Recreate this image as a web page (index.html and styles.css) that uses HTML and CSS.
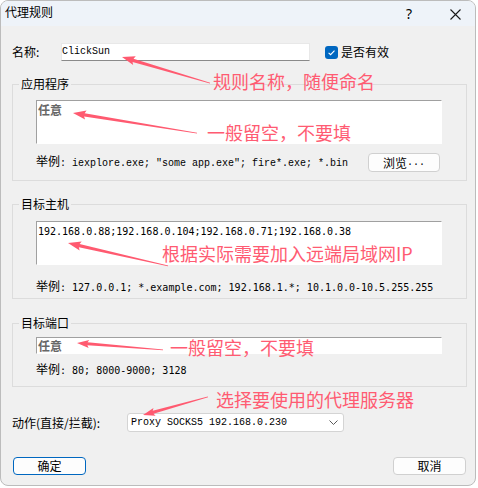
FILE: index.html
```html
<!DOCTYPE html>
<html lang="zh-CN">
<head>
<meta charset="utf-8">
<title>代理规则</title>
<link rel="stylesheet" href="styles.css">
</head>
<body>
<div class="window">
  <div class="titlebar">
    <span class="title">代理规则</span>
    <span class="help">?</span>
    <span class="close">
      <svg width="11" height="11" viewBox="0 0 11 11"><path d="M0.5 0.5 L10.5 10.5 M10.5 0.5 L0.5 10.5" stroke="#1a1a1a" stroke-width="1.1" fill="none"/></svg>
    </span>
  </div>

  <div class="content">
    <div class="name-row">
      <span class="name-label">名称:</span>
      <div class="input mono">ClickSun</div>
      <span class="check">
        <svg width="13" height="13" viewBox="0 0 13 13"><path d="M3.6 6.8 L5.6 8.7 L9.5 4.6" stroke="#fff" stroke-width="1.1" fill="none"/></svg>
      </span>
      <span class="check-label">是否有效</span>
    </div>

    <fieldset class="group group-app">
      <legend>应用程序</legend>
      <div class="group-body">
        <div class="area area-tall"><span class="placeholder">任意</span></div>
        <div class="example-row">
          <span class="example">举例<span class="mono">: iexplore.exe; "some app.exe"; fire*.exe; *.bin</span></span>
          <button class="btn browse">浏览<span class="mono">...</span></button>
        </div>
      </div>
    </fieldset>

    <fieldset class="group group-host">
      <legend>目标主机</legend>
      <div class="group-body">
        <div class="area area-tall"><span class="sansmono hosts">192.168.0.88;192.168.0.104;192.168.0.71;192.168.0.38</span></div>
        <div class="example-row">
          <span class="example">举例<span class="sansmono">: 127.0.0.1; *.example.com; 192.168.1.*; 10.1.0.0-10.5.255.255</span></span>
        </div>
      </div>
    </fieldset>

    <fieldset class="group group-port">
      <legend>目标端口</legend>
      <div class="group-body">
        <div class="area area-short"><span class="placeholder">任意</span></div>
        <div class="example-row">
          <span class="example">举例<span class="sansmono">: 80; 8000-9000; 3128</span></span>
        </div>
      </div>
    </fieldset>

    <div class="action-row">
      <span class="action-label">动作(直接/拦截):</span>
      <div class="select">
        <span class="mono">Proxy SOCKS5 192.168.0.230</span>
        <svg width="9" height="5" viewBox="0 0 9 5"><path d="M0.5 0.5 L4.5 4.5 L8.5 0.5" stroke="#5a5a5a" stroke-width="1" fill="none"/></svg>
      </div>
    </div>

    <div class="button-row">
      <button class="btn default">确定</button>
      <button class="btn">取消</button>
    </div>
  </div>
</div>

<div class="notes">
  <svg class="arrows" width="478" height="488" viewBox="0 0 478 488">
    <g fill="#ff5a70">
      <g transform="translate(122 57) rotate(16.5)"><polygon points="0,0 13,-4.6 11.5,-1.7 91.8,-0.4 91.8,0.4 11.5,1.7 13,4.6"/></g>
      <g transform="translate(73 113) rotate(9.2)"><polygon points="0,0 13,-4.6 11.5,-1.7 125.6,-0.4 125.6,0.4 11.5,1.7 13,4.6"/></g>
      <g transform="translate(68 243) rotate(12.9)"><polygon points="0,0 13,-4.6 11.5,-1.7 102.6,-0.4 102.6,0.4 11.5,1.7 13,4.6"/></g>
      <g transform="translate(77 343) rotate(4.6)"><polygon points="0,0 12,-4 10.5,-1.5 86.3,-0.4 86.3,0.4 10.5,1.5 12,4"/></g>
      <g transform="translate(143 415) rotate(-15.5)"><polygon points="0,0 12,-4 10.5,-1.5 67.4,-0.4 67.4,0.4 10.5,1.5 12,4"/></g>
    </g>
  </svg>
  <span class="note note-name">规则名称，随便命名</span>
  <span class="note note-app">一般留空，不要填</span>
  <span class="note note-host">根据实际需要加入远端局域网IP</span>
  <span class="note note-port">一般留空，不要填</span>
  <span class="note note-action">选择要使用的代理服务器</span>
</div>
</body>
</html>
```

FILE: styles.css
```css
html, body {
  margin: 0;
  padding: 0;
  background: #ffffff;
}

body {
  position: relative;
  width: 478px;
  height: 488px;
  overflow: hidden;
}

.window {
  width: 476px;
  height: 486px;
  box-sizing: border-box;
  border: 1px solid #bcbcbc;
  border-radius: 8px;
  background: #f0f0f0;
  overflow: hidden;
  font: 12px/16px "Noto Sans CJK SC", sans-serif;
  color: #000;
}

.mono {
  font-family: "Liberation Mono", "Noto Sans CJK SC", monospace;
  font-size: 10px;
}

.sansmono {
  font-family: "DejaVu Sans Mono", "Noto Sans CJK SC", monospace;
  font-size: 10px;
}

/* title bar */
.titlebar {
  height: 25px;
  background: #eef3f9;
  display: flex;
  align-items: flex-start;
  padding-left: 4px;
}

.title {
  margin-top: 3px;
}

.help {
  margin-left: auto;
  width: 52px;
  height: 25px;
  line-height: 25px;
  text-align: center;
  font-family: "Noto Sans", sans-serif;
  font-size: 14px;
}

.close {
  width: 40px;
  height: 25px;
  display: flex;
  align-items: center;
  justify-content: center;
  padding-top: 1px;
  box-sizing: border-box;
}

/* form body */
.content {
  display: flex;
  flex-direction: column;
  padding: 0 8px 0 11px;
}

.name-row {
  margin-top: 17px;
  height: 18px;
  display: flex;
  align-items: center;
}

.name-label {
  width: 49px;
}

.input {
  width: 249px;
  height: 18px;
  box-sizing: border-box;
  background: #fff;
  border: 1px solid #e8e8e8;
  border-bottom-color: #8a8a8a;
  line-height: 16px;
  padding-left: 0;
}

.check {
  margin-left: 15px;
  width: 13px;
  height: 13px;
  border-radius: 3px;
  background: #0067c0;
  display: flex;
}

.check-label {
  margin-left: 3px;
}

/* group boxes */
.group {
  margin: 15px 0 0;
  padding: 0;
  width: 455px;
  box-sizing: border-box;
  border: 1px solid #dcdcdc;
  min-width: 0;
}

.group legend {
  margin-left: 6px;
  padding: 0 2px;
  line-height: 16px;
}

.group-body {
  padding-left: 23px;
}

.group-app .group-body {
  padding-top: 8px;
  padding-bottom: 8px;
}

.group-host {
  margin-top: 15px;
}

.group-host .group-body {
  padding-top: 9px;
  padding-bottom: 3px;
}

.group-port {
  margin-top: 16px;
}

.group-port .group-body {
  padding-top: 6px;
  padding-bottom: 8px;
}

.area {
  width: 406px;
  box-sizing: border-box;
  background: #fff;
  border: 1px solid #fff;
  border-top-color: #a0a0a0;
  border-left-color: #a0a0a0;
  padding-left: 1px;
}

.area-tall {
  height: 44px;
  padding-top: 1px;
}

.area-short {
  height: 17px;
  padding-top: 0;
  line-height: 15px;
}

.placeholder {
  font-weight: 700;
  color: #676767;
}

.hosts {
  display: block;
  padding-top: 1px;
}

.example-row {
  width: 406px;
  display: flex;
  align-items: center;
  justify-content: space-between;
  height: 16px;
  margin-top: 14px;
}

.group-app .example-row {
  height: 19px;
  margin-top: 9px;
}

.group-port .example-row {
  margin-top: 8px;
}

.example {
  white-space: pre;
}

/* buttons */
.btn {
  font: 12px/16px "Noto Sans CJK SC", sans-serif;
  color: #000;
  background: #fdfdfd;
  border: 1px solid #d0d0d0;
  border-radius: 4px;
  padding: 0;
  width: 73px;
  height: 18px;
  box-sizing: border-box;
  display: flex;
  align-items: center;
  justify-content: center;
}

.browse {
  width: 72px;
  height: 19px;
  margin-right: 2px;
}

.btn.default {
  border-color: #0067c0;
}

/* action row */
.action-row {
  margin-top: 26px;
  height: 19px;
  display: flex;
  align-items: center;
}

.action-label {
  width: 115px;
}

.select {
  width: 217px;
  height: 19px;
  box-sizing: border-box;
  background: #fff;
  border: 1px solid #d4d4d4;
  border-radius: 3px;
  display: flex;
  align-items: center;
  justify-content: space-between;
  padding: 0 5px 0 3px;
}

.button-row {
  margin-top: 25px;
  display: flex;
  justify-content: space-between;
  padding: 0 1px;
}

/* annotations drawn over the dialog */
.notes {
  position: absolute;
  left: 0;
  top: 0;
  width: 478px;
  height: 488px;
  pointer-events: none;
}

.arrows {
  position: absolute;
  left: 0;
  top: 0;
}

.note {
  position: absolute;
  font: 18px/18px "Noto Sans CJK SC", sans-serif;
  color: #ff5b72;
  white-space: nowrap;
}

.note-name { left: 213px; top: 72px; }
.note-app { left: 207px; top: 123px; }
.note-host { left: 162px; top: 244px; }
.note-port { left: 170px; top: 338px; }
.note-action { left: 216px; top: 390px; }
```
